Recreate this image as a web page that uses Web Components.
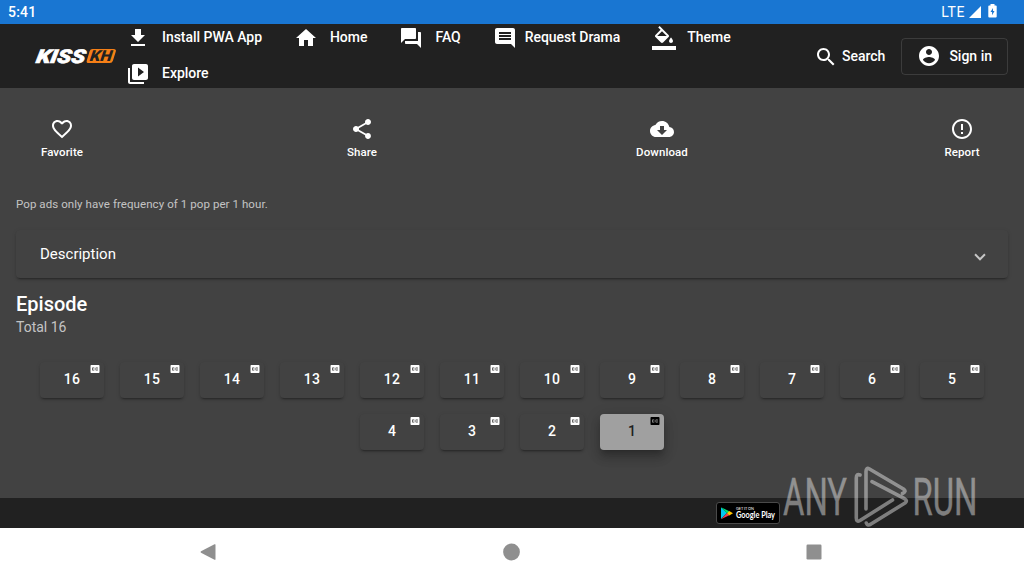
<!DOCTYPE html>
<html lang="en">
<head>
<meta charset="utf-8">
<title>KissKH</title>
<style>
  html, body {
    margin: 0;
    height: 100%;
    overflow: hidden;
    background: #424242;
    color: #fff;
    font-family: Roboto, "Liberation Sans", sans-serif;
  }
</style>
</head>
<body>
<drama-app></drama-app>

<script>
const ICONS = {
  download: 'M19 9h-4V3H9v6H5l7 7 7-7zM5 18v2h14v-2H5z',
  home: 'M10 20v-6h4v6h5v-8h3L12 3 2 12h3v8z',
  forum: 'M21 6h-2v9H6v2c0 .55.45 1 1 1h11l4 4V7c0-.55-.45-1-1-1zm-4 6V3c0-.55-.45-1-1-1H3c-.55 0-1 .45-1 1v14l4-4h10c.55 0 1-.45 1-1z',
  comment: 'M21.99 4c0-1.1-.89-2-1.99-2H4c-1.1 0-2 .9-2 2v12c0 1.1.9 2 2 2h14l4 4-.01-18zM18 14H6v-2h12v2zm0-3H6V9h12v2zm0-3H6V6h12v2z',
  fill: 'M16.56 8.94L7.62 0 6.21 1.41l2.38 2.38-5.15 5.15c-.59.59-.59 1.54 0 2.12l5.5 5.5c.29.29.68.44 1.06.44s.77-.15 1.06-.44l5.5-5.5c.59-.58.59-1.53 0-2.12zM5.21 10L10 5.21 14.79 10H5.21zM19 11.5s-2 2.17-2 3.5c0 1.1.9 2 2 2s2-.9 2-2c0-1.33-2-3.5-2-3.5zM0 20h24v4H0z',
  library: 'M4 6H2v14c0 1.1.9 2 2 2h14v-2H4V6zm16-4H8c-1.1 0-2 .9-2 2v12c0 1.1.9 2 2 2h12c1.1 0 2-.9 2-2V4c0-1.1-.9-2-2-2zm-8 12.5v-9l6 4.5-6 4.5z',
  search: 'M15.5 14h-.79l-.28-.27C15.41 12.59 16 11.11 16 9.5 16 5.91 13.09 3 9.5 3S3 5.91 3 9.5 5.91 16 9.5 16c1.61 0 3.09-.59 4.23-1.57l.27.28v.79l5 4.99L20.49 19l-4.99-5zm-6 0C7.01 14 5 11.99 5 9.5S7.01 5 9.5 5 14 7.01 14 9.5 11.99 14 9.5 14z',
  account: 'M12 2C6.48 2 2 6.48 2 12s4.48 10 10 10 10-4.48 10-10S17.52 2 12 2zm0 3c1.66 0 3 1.34 3 3s-1.34 3-3 3-3-1.34-3-3 1.34-3 3-3zm0 14.2c-2.5 0-4.71-1.28-6-3.22.03-1.99 4-3.08 6-3.08 1.99 0 5.97 1.09 6 3.08-1.29 1.94-3.5 3.22-6 3.22z',
  favorite: 'M16.5 3c-1.74 0-3.41.81-4.5 2.09C10.91 3.81 9.24 3 7.5 3 4.42 3 2 5.42 2 8.5c0 3.78 3.4 6.86 8.55 11.54L12 21.35l1.45-1.32C18.6 15.36 22 12.28 22 8.5 22 5.42 19.58 3 16.5 3zm-4.4 15.55l-.1.1-.1-.1C7.14 14.24 4 11.39 4 8.5 4 6.5 5.5 5 7.5 5c1.54 0 3.04.99 3.57 2.36h1.87C13.46 5.99 14.96 5 16.5 5c2 0 3.5 1.5 3.5 3.5 0 2.89-3.14 5.74-7.9 10.05z',
  share: 'M18 16.08c-.76 0-1.44.3-1.96.77L8.91 12.7c.05-.23.09-.46.09-.7s-.04-.47-.09-.7l7.05-4.11c.54.5 1.25.81 2.04.81 1.66 0 3-1.34 3-3s-1.34-3-3-3-3 1.34-3 3c0 .24.04.47.09.7L8.04 9.81C7.5 9.31 6.79 9 6 9c-1.66 0-3 1.34-3 3s1.34 3 3 3c.79 0 1.5-.31 2.04-.81l7.12 4.16c-.05.21-.08.43-.08.65 0 1.61 1.31 2.92 2.92 2.92s2.92-1.31 2.92-2.92-1.31-2.92-2.92-2.92z',
  cloud: 'M19.35 10.04C18.67 6.59 15.64 4 12 4 9.11 4 6.6 5.64 5.35 8.04 2.34 8.36 0 10.91 0 14c0 3.31 2.69 6 6 6h13c2.76 0 5-2.24 5-5 0-2.64-2.05-4.78-4.65-4.96zM17 13l-5 5-5-5h3V9h4v4h3z',
  report: 'M11 15h2v2h-2zm0-8h2v6h-2zm.99-5C6.47 2 2 6.48 2 12s4.47 10 9.99 10C17.52 22 22 17.52 22 12S17.52 2 11.99 2zM12 20c-4.42 0-8-3.58-8-8s3.58-8 8-8 8 3.58 8 8-3.58 8-8 8z',
  cc: 'M19 4H5c-1.11 0-2 .9-2 2v12c0 1.1.89 2 2 2h14c1.1 0 2-.9 2-2V6c0-1.1-.9-2-2-2zm-8 7H9.5v-.5h-2v3h2V13H11v1c0 .55-.45 1-1 1H7c-.55 0-1-.45-1-1v-4c0-.55.45-1 1-1h3c.55 0 1 .45 1 1v1zm7 0h-1.5v-.5h-2v3h2V13H18v1c0 .55-.45 1-1 1h-3c-.55 0-1-.45-1-1v-4c0-.55.45-1 1-1h3c.55 0 1 .45 1 1v1z'
};

class BaseElement extends HTMLElement {
  constructor() {
    super();
    this.attachShadow({ mode: 'open' });
  }

  connectedCallback() {
    const template = document.createElement('template');
    template.innerHTML = this.template();
    this.shadowRoot.innerHTML = '';
    this.shadowRoot.appendChild(template.content.cloneNode(true));
  }
}

class MatIcon extends BaseElement {
  template() {
    return `
      <style>
        :host {
          display: block;
          flex: none;
          width: var(--icon-size, 24px);
          height: var(--icon-size, 24px);
        }

        svg {
          display: block;
          width: 100%;
          height: 100%;
          fill: currentColor;
        }
      </style>
      <svg viewBox="0 0 24 24"><path d="${ICONS[this.getAttribute('name')]}"/></svg>
    `;
  }
}

class StatusBar extends BaseElement {
  template() {
    return `
      <style>
        :host {
          display: flex;
          align-items: center;
          flex: none;
          height: 24px;
          padding: 0 27px 0 8px;
          box-sizing: border-box;
          background: #1976d2;
          font-size: 14px;
          line-height: 24px;
        }

        .time {
          flex: 1;
          font-weight: 500;
          letter-spacing: 0.2px;
        }

        .network {
          letter-spacing: 0.6px;
        }

        svg {
          display: block;
          fill: #fff;
        }

        .signal {
          margin: 0 7px 0 4px;
        }

        .battery {
          margin-bottom: 2px;
        }
      </style>
      <span class="time">5:41</span>
      <span class="network">LTE</span>
      <svg class="signal" width="12" height="12"><path d="M12 0v12H0z"/></svg>
      <svg class="battery" width="9" height="14" viewBox="0 0 9 14">
        <path d="M2.5 0h4v1.4h1.3q.9 0 .9.9v10.3q0 .9-.9.9H1.2q-.9 0-.9-.9V2.300q0-.9.9-.9h1.300z"/>
        <path fill="#1976d2" d="M5 4L2.500 8h1.600v3.300L6.500 7H5z"/>
      </svg>
    `;
  }
}

class KissLogo extends BaseElement {
  template() {
    return `
      <style>
        :host {
          display: block;
          flex: none;
          width: 80px;
          height: 16px;
        }

        svg {
          display: block;
          overflow: visible;
        }

        text {
          font-family: Roboto, "Liberation Sans", sans-serif;
          font-weight: 900;
          font-style: italic;
        }
      </style>
      <svg width="80" height="16" viewBox="0 0 80 16">
        <text transform="translate(-.5 14.700) skewX(-10)" font-size="19" textLength="49" lengthAdjust="spacingAndGlyphs" fill="#fff" stroke="#fff" stroke-width=".7">KISS</text>
        <path fill="#f57f17" d="M56.500 1H77.500Q80.600 1 79.800 3.500L76.900 12.700Q76.200 15 73.800 15H52.800Q50 15 50.800 12.400L53.600 3.300Q54.300 1 56.500 1z"/>
        <text transform="translate(53.500 13.200) skewX(-8)" font-size="15" textLength="22" lengthAdjust="spacingAndGlyphs" fill="#212121">KH</text>
      </svg>
    `;
  }
}

class NavItem extends BaseElement {
  template() {
    return `
      <style>
        :host {
          display: flex;
          align-items: center;
          height: 36px;
          padding: 0 16px;
          font-size: 14px;
          font-weight: 500;
          line-height: 36px;
          letter-spacing: -0.03px;
          white-space: nowrap;
        }

        mat-icon {
          margin: 2px var(--icon-gap, 12px) 0 0;
        }
      </style>
      <mat-icon name="${this.getAttribute('icon')}"></mat-icon>
      <slot></slot>
    `;
  }
}

class TopToolbar extends BaseElement {
  template() {
    return `
      <style>
        :host {
          display: flex;
          align-items: center;
          flex: none;
          height: 64px;
          padding: 0 16px 0 36px;
          box-sizing: border-box;
          background: #212121;
          font-size: 14px;
          font-weight: 500;
        }

        nav {
          display: flex;
          flex-wrap: wrap;
          flex: 1;
          margin: -4px 0 -2px -6px;
        }

        .request {
          --icon-gap: 8px;
        }

        .theme {
          --icon-gap: 11px;
        }

        .search,
        .sign-in {
          display: flex;
          align-items: center;
          height: 36px;
          line-height: 36px;
          white-space: nowrap;
        }

        .search {
          gap: 4px;
          margin-right: 16px;
        }

        .search mat-icon {
          margin-top: 1px;
        }

        .sign-in {
          gap: 8px;
          padding: 0 15px;
          border: 1px solid rgba(255, 255, 255, 0.12);
          border-radius: 4px;
          height: 35px;
        }
      </style>
      <kiss-logo></kiss-logo>
      <nav>
        <nav-item icon="download">Install PWA App</nav-item>
        <nav-item icon="home">Home</nav-item>
        <nav-item icon="forum">FAQ</nav-item>
        <nav-item icon="comment" class="request">Request Drama</nav-item>
        <nav-item icon="fill" class="theme">Theme</nav-item>
        <nav-item icon="library">Explore</nav-item>
      </nav>
      <div class="search"><mat-icon name="search"></mat-icon>Search</div>
      <div class="sign-in"><mat-icon name="account"></mat-icon>Sign in</div>
    `;
  }
}

class ActionButton extends BaseElement {
  template() {
    return `
      <style>
        :host {
          display: flex;
          flex-direction: column;
          align-items: center;
          width: 92px;
          font-size: 11.500px;
          font-weight: 500;
          line-height: 16px;
          letter-spacing: 0.1px;
        }

        mat-icon {
          margin-bottom: 3px;
        }
      </style>
      <mat-icon name="${this.getAttribute('icon')}"></mat-icon>
      <span><slot></slot></span>
    `;
  }
}

class ExpansionPanel extends BaseElement {
  template() {
    return `
      <style>
        :host {
          display: flex;
          align-items: center;
          justify-content: space-between;
          height: 48px;
          padding: 0 24px;
          border-radius: 4px;
          background: #424242;
          font-size: 15px;
          box-shadow: 0 3px 1px -2px rgba(0, 0, 0, 0.2),
                      0 2px 2px 0 rgba(0, 0, 0, 0.14),
                      0 1px 5px 0 rgba(0, 0, 0, 0.08);
        }

        .indicator {
          width: 6px;
          height: 6px;
          margin-top: 2px;
          border: solid rgba(255, 255, 255, 0.7);
          border-width: 0 2px 2px 0;
          transform: rotate(45deg);
        }
      </style>
      <slot></slot>
      <span class="indicator"></span>
    `;
  }
}

class EpisodeButton extends BaseElement {
  template() {
    return `
      <style>
        :host {
          position: relative;
          display: block;
          width: 64px;
          height: 36px;
          border-radius: 4px;
          background: #424242;
          font-size: 14px;
          font-weight: 500;
          line-height: 35px;
          text-align: center;
          letter-spacing: 0.2px;
          box-shadow: 0 3px 1px -2px rgba(0, 0, 0, 0.2),
                      0 2px 2px 0 rgba(0, 0, 0, 0.14),
                      0 1px 5px 0 rgba(0, 0, 0, 0.08);
        }

        :host([active]) {
          background: #a0a0a0;
          color: #212121;
          box-shadow: 0 5px 5px -3px rgba(0, 0, 0, 0.2),
                      0 8px 10px 1px rgba(0, 0, 0, 0.14),
                      0 3px 14px 2px rgba(0, 0, 0, 0.12);
        }

        mat-icon {
          --icon-size: 12px;
          position: absolute;
          top: 1px;
          right: 3px;
        }

        :host([active]) mat-icon {
          color: #000;
        }
      </style>
      <slot></slot>
      <mat-icon name="cc"></mat-icon>
    `;
  }
}

class EpisodeList extends BaseElement {
  template() {
    const total = Number(this.getAttribute('total'));
    const current = Number(this.getAttribute('current'));
    const episodes = Array.from({ length: total }, (_, i) => total - i);
    return `
      <style>
        :host {
          display: block;
        }

        h2 {
          margin: 0;
          font-size: 20px;
          font-weight: 500;
          line-height: 26px;
        }

        .total {
          color: rgba(255, 255, 255, 0.7);
          font-size: 14px;
          line-height: 20px;
        }

        .list {
          display: flex;
          flex-wrap: wrap;
          justify-content: center;
          gap: 16px;
          margin-top: 25px;
        }
      </style>
      <h2>Episode</h2>
      <div class="total">Total ${total}</div>
      <div class="list">
        ${episodes.map(n => `<episode-button ${n === current ? 'active' : ''}>${n}</episode-button>`).join('')}
      </div>
    `;
  }
}

class PlayBadge extends BaseElement {
  template() {
    return `
      <style>
        :host {
          display: flex;
          align-items: center;
          width: 64px;
          height: 22px;
          box-sizing: border-box;
          padding-left: 4px;
          border: 1px solid #4a4a4a;
          border-radius: 3px;
          background: #000;
        }

        svg {
          display: block;
          overflow: visible;
        }

        text {
          font-family: Lato, "Open Sans", sans-serif;
          fill: #fff;
        }
      </style>
      <svg width="58" height="20" viewBox="0 0 58 20">
        <path fill="#00c8f0" d="M0 4.500v11.500L6 10z"/>
        <path fill="#00e070" d="M0 4.200L8.300 8.200 6 10.300z"/>
        <path fill="#f33c48" d="M0 16.300L8.300 12.300 6 10z"/>
        <path fill="#ffc400" d="M8.200 8L12 10.200 8.200 12.500 6 10.200z"/>
        <text x="15" y="6.800" font-size="3.800" textLength="18">GET IT ON</text>
        <text x="15" y="15" font-size="8.500" textLength="39" lengthAdjust="spacingAndGlyphs" font-weight="700">Google Play</text>
      </svg>
    `;
  }
}

class AppFooter extends BaseElement {
  template() {
    return `
      <style>
        :host {
          display: flex;
          align-items: center;
          justify-content: flex-end;
          flex: none;
          height: 30px;
          padding-right: 244px;
          background: #212121;
        }
      </style>
      <play-badge></play-badge>
    `;
  }
}

class SystemNav extends BaseElement {
  template() {
    return `
      <style>
        :host {
          display: flex;
          align-items: center;
          justify-content: space-between;
          flex: none;
          height: 48px;
          padding: 0 202px 0 200px;
          background: #fff;
        }

        svg {
          display: block;
          fill: #8f8f8f;
        }
      </style>
      <svg width="16" height="18"><path d="M15.500 1.800v14.400q0 1-1 .5L1 9.700q-1-.7 0-1.400L14.500 1.300q1-.5 1 .5z"/></svg>
      <svg width="18" height="18"><circle cx="9.500" cy="9" r="8.400"/></svg>
      <svg width="16" height="18"><rect x=".5" y="1.500" width="15" height="15" rx="1.200"/></svg>
    `;
  }
}

class AnyrunMark extends BaseElement {
  template() {
    return `
      <style>
        :host {
          display: block;
          opacity: 0.42;
        }

        svg {
          display: block;
          overflow: visible;
        }

        text {
          font-family: Roboto, "Liberation Sans", sans-serif;
          font-size: 52px;
          fill: #fff;
          stroke: #fff;
          stroke-width: 0.3px;
        }

        path {
          fill: none;
          stroke: #fff;
          stroke-width: 3.600;
          stroke-linecap: round;
          stroke-linejoin: round;
        }
      </style>
      <svg width="200" height="66" viewBox="0 0 200 66">
        <text x="3" y="50" textLength="64" lengthAdjust="spacingAndGlyphs">ANY</text>
        <!-- three interlocking strokes of the play triangle, drawn as one path so overlaps stay even -->
        <path d="M80 10Q76.300 8.500 76.300 13V53Q76.300 57.500 80 55.500L112.500 35M86 44V6.500Q86 2 89.500 4L123.500 24Q127 26.500 122.500 28.500M92 16.700L124.500 33.700Q128 35.700 125 38L91 59Q87.500 61.500 86.300 58"/>
        <text x="132.500" y="50" textLength="65" lengthAdjust="spacingAndGlyphs">RUN</text>
      </svg>
    `;
  }
}

class DramaApp extends BaseElement {
  template() {
    return `
      <style>
        :host {
          position: relative;
          display: flex;
          flex-direction: column;
          width: 1024px;
          height: 576px;
          overflow: hidden;
        }

        main {
          flex: 1;
          min-height: 0;
          padding: 29px 16px 0;
          box-sizing: border-box;
        }

        .actions {
          display: flex;
          justify-content: space-between;
        }

        .notice {
          margin: 36px 0 18px;
          color: rgba(255, 255, 255, 0.7);
          font-size: 11.500px;
          line-height: 16px;
          letter-spacing: 0.075px;
        }

        episode-list {
          margin-top: 13px;
        }

        anyrun-mark {
          position: absolute;
          left: 780px;
          top: 465px;
        }
      </style>
      <status-bar></status-bar>
      <top-toolbar></top-toolbar>
      <main>
        <div class="actions">
          <action-button icon="favorite">Favorite</action-button>
          <action-button icon="share">Share</action-button>
          <action-button icon="cloud">Download</action-button>
          <action-button icon="report">Report</action-button>
        </div>
        <div class="notice">Pop ads only have frequency of 1 pop per 1 hour.</div>
        <expansion-panel>Description</expansion-panel>
        <episode-list total="16" current="1"></episode-list>
      </main>
      <app-footer></app-footer>
      <system-nav></system-nav>
      <anyrun-mark></anyrun-mark>
    `;
  }
}

customElements.define('mat-icon', MatIcon);
customElements.define('status-bar', StatusBar);
customElements.define('kiss-logo', KissLogo);
customElements.define('nav-item', NavItem);
customElements.define('top-toolbar', TopToolbar);
customElements.define('action-button', ActionButton);
customElements.define('expansion-panel', ExpansionPanel);
customElements.define('episode-button', EpisodeButton);
customElements.define('episode-list', EpisodeList);
customElements.define('play-badge', PlayBadge);
customElements.define('app-footer', AppFooter);
customElements.define('system-nav', SystemNav);
customElements.define('anyrun-mark', AnyrunMark);
customElements.define('drama-app', DramaApp);
</script>
</body>
</html>
